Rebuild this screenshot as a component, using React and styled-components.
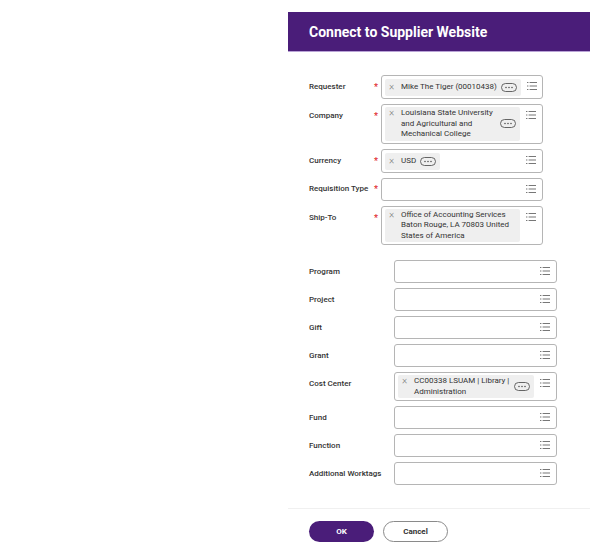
import styled, { createGlobalStyle } from "styled-components";

const GlobalStyle = createGlobalStyle`
  body {
    margin: 0;
    background: #fff;
    font-family: Roboto, "Liberation Sans", Arial, sans-serif;
    color: #333;
  }
`;

const Panel = styled.div`
  margin-left: 288px;
  padding-top: 12px;
  width: 302px;
  display: flex;
  flex-direction: column;
`;

const Header = styled.div`
  height: 39px;
  background: #4a1d79;
  display: flex;
  align-items: center;
  padding-left: 21px;
  box-shadow: 0 1px 0 #b9a3d6;
`;

const Title = styled.h1`
  margin: 0;
  font-size: 14px;
  font-weight: 700;
  color: #fff;
`;

const Form = styled.div`
  display: flex;
  flex-direction: column;
  gap: 15px;
  padding: 24px 0 0 21px;
`;

const Group = styled.div`
  display: grid;
  grid-template-columns: ${(p) => p.$label}px ${(p) => p.$field}px;
  column-gap: ${(p) => p.$gap}px;
  row-gap: 5px;
`;

const Label = styled.div`
  display: flex;
  justify-content: space-between;
  align-items: flex-start;
  padding-top: ${(p) => (p.$tall ? 7 : 0)}px;
  align-self: ${(p) => (p.$tall ? "start" : "center")};
  font-size: 8px;
  font-weight: 500;
  color: #333;
  white-space: nowrap;
`;

const Star = styled.span`
  color: #e0262b;
  font-size: 9px;
  line-height: 10px;
`;

const Field = styled.div`
  box-sizing: border-box;
  min-height: 23px;
  border: 1px solid #b5b5b5;
  border-radius: 3px;
  display: flex;
  align-items: flex-start;
  padding: 2px 6px 2px 3px;
  gap: 6px;
`;

const Pill = styled.div`
  display: flex;
  align-items: ${(p) => (p.$multi ? "flex-start" : "center")};
  background: #efefef;
  border-radius: 2px;
  padding: ${(p) => (p.$multi ? "1px 4px" : "2px 4px")};
  min-height: 13px;
  margin-top: ${(p) => (p.$multi ? 0 : 1)}px;
  flex: ${(p) => (p.$multi ? 1 : "0 0 auto")};
  font-size: 8px;
  line-height: 10.5px;
  color: #333;
`;

const Remove = styled.span`
  color: #777;
  font-size: 10px;
  font-weight: 300;
  width: 12px;
  flex: 0 0 auto;
`;

const PillText = styled.span`
  flex: ${(p) => (p.$multi ? 1 : "0 0 auto")};
`;

const More = styled.span`
  flex: 0 0 auto;
  margin-left: 4px;
  display: flex;
  align-self: center;
`;

const ListButton = styled.span`
  margin-left: auto;
  flex: 0 0 auto;
  display: flex;
  padding-top: 4px;
`;

const Footer = styled.div`
  margin-top: 23px;
  border-top: 1px solid #f0f0f0;
  padding: 12px 0 0 21px;
  display: flex;
  gap: 9px;
`;

const Button = styled.button`
  width: 65px;
  height: 21px;
  border-radius: 11px;
  font-family: inherit;
  font-size: 8px;
  font-weight: 700;
  cursor: pointer;
  background: ${(p) => (p.$primary ? "#4a1d79" : "#fff")};
  color: ${(p) => (p.$primary ? "#fff" : "#333")};
  border: ${(p) => (p.$primary ? "none" : "1px solid #8a8a8a")};
`;

function ListIcon() {
  return (
    <svg width="10" height="8" viewBox="0 0 10 8" fill="#777">
      <rect x="0" y="0" width="1.4" height="1" />
      <rect x="0" y="3.5" width="1.4" height="1" />
      <rect x="0" y="7" width="1.4" height="1" />
      <rect x="2.6" y="0" width="7.4" height="1" />
      <rect x="2.6" y="3.5" width="7.4" height="1" />
      <rect x="2.6" y="7" width="7.4" height="1" />
    </svg>
  );
}

function MoreIcon() {
  return (
    <svg width="16" height="9" viewBox="0 0 16 9">
      <rect x="0.5" y="0.5" width="15" height="8" rx="4" fill="none" stroke="#555" strokeWidth="0.9" />
      <circle cx="5" cy="4.5" r="0.8" fill="#555" />
      <circle cx="8" cy="4.5" r="0.8" fill="#555" />
      <circle cx="11" cy="4.5" r="0.8" fill="#555" />
    </svg>
  );
}

function Value({ text, more, multi }) {
  return (
    <Pill $multi={multi}>
      <Remove>×</Remove>
      <PillText $multi={multi}>{text}</PillText>
      {more && (
        <More>
          <MoreIcon />
        </More>
      )}
    </Pill>
  );
}

const required = [
  { label: "Requester", value: "Mike The Tiger (00010438)", more: true },
  { label: "Company", value: "Louisiana State University and Agricultural and Mechanical College", more: true, multi: true },
  { label: "Currency", value: "USD", more: true },
  { label: "Requisition Type" },
  { label: "Ship-To", value: "Office of Accounting Services Baton Rouge, LA 70803 United States of America", multi: true },
];

const worktags = [
  { label: "Program" },
  { label: "Project" },
  { label: "Gift" },
  { label: "Grant" },
  { label: "Cost Center", value: "CC00338 LSUAM | Library | Administration", more: true, multi: true },
  { label: "Fund" },
  { label: "Function" },
  { label: "Additional Worktags" },
];

function Rows({ rows, star }) {
  return rows.map((r) => (
    <Row key={r.label} row={r} star={star} />
  ));
}

function Row({ row, star }) {
  const tall = row.multi;
  return (
    <>
      <Label $tall={tall}>
        <span>{row.label}</span>
        {star && <Star>*</Star>}
      </Label>
      <Field>
        {row.value && <Value text={row.value} more={row.more} multi={row.multi} />}
        <ListButton>
          <ListIcon />
        </ListButton>
      </Field>
    </>
  );
}

export default function App() {
  return (
    <>
      <GlobalStyle />
      <Panel>
        <Header>
          <Title>Connect to Supplier Website</Title>
        </Header>
        <Form>
          <Group $label={69} $field={162} $gap={3}>
            <Rows rows={required} star />
          </Group>
          <Group $label={85} $field={163} $gap={0}>
            <Rows rows={worktags} />
          </Group>
        </Form>
        <Footer>
          <Button $primary>OK</Button>
          <Button>Cancel</Button>
        </Footer>
      </Panel>
    </>
  );
}
